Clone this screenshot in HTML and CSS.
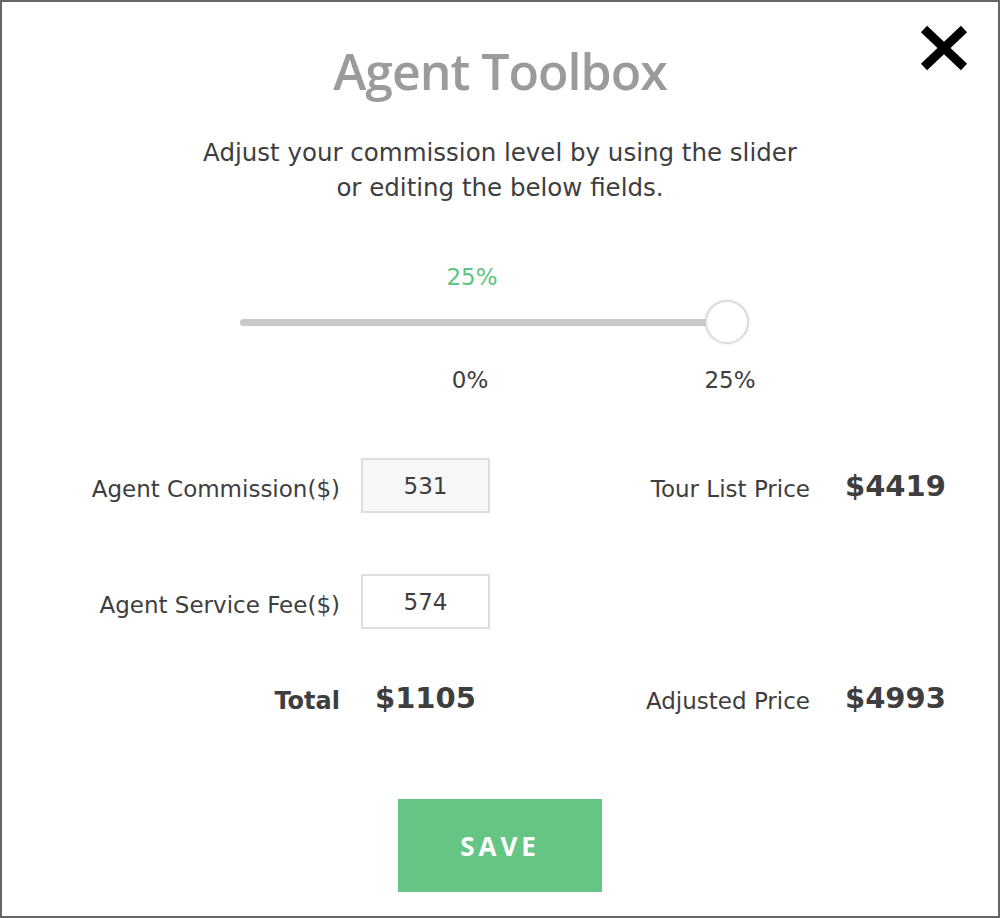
FILE: index.html
```html
<!DOCTYPE html>
<html lang="en">

<head>
    <meta charset="utf-8" />
    <meta name="viewport" content="width=device-width, initial-scale=1.0" />
    <title>Agent Toolbox</title>
    <link rel="stylesheet" href="styles.css">
</head>

<body>
    <div class="modal">
        <a class="close" href="#" aria-label="Close">
            <svg width="48" height="46" viewBox="0 0 48 46">
                <path d="M4 4 L44 42 M44 4 L4 42" stroke="#000" stroke-width="9" fill="none" />
            </svg>
        </a>
        <h1 class="title">Agent Toolbox</h1>
        <p class="intro">Adjust your commission level by using the slider<br>or editing the below fields.</p>

        <div class="slider">
            <div class="slider-value">25%</div>
            <div class="slider-rail">
                <div class="slider-thumb"></div>
            </div>
            <div class="slider-marks">
                <span class="mark mark-min">0%</span>
                <span class="mark mark-max">25%</span>
            </div>
        </div>

        <form class="fields">
            <div class="row row-first">
                <label class="label">Agent Commission($)</label>
                <div class="cell"><input class="field field-readonly" type="text" value="531"></div>
                <span class="label">Tour List Price</span>
                <span class="amount">$4419</span>
            </div>
            <div class="row row-second">
                <label class="label">Agent Service Fee($)</label>
                <div class="cell"><input class="field" type="text" value="574"></div>
                <span class="label"></span>
                <span class="amount"></span>
            </div>
            <div class="row row-total">
                <span class="label label-bold">Total</span>
                <span class="amount amount-total">$1105</span>
                <span class="label">Adjusted Price</span>
                <span class="amount">$4993</span>
            </div>
        </form>

        <div class="actions">
            <button class="save" type="button">SAVE</button>
        </div>
    </div>
</body>

</html>
```

FILE: styles.css
```css
html,
body {
    margin: 0;
    padding: 0;
    background-color: #fff;
}

.modal {
    position: relative;
    box-sizing: border-box;
    width: 1000px;
    height: 918px;
    border: 2px solid #666;
    padding-top: 37px;
    font-family: "DejaVu Sans", sans-serif;
    color: #3e3e3e;
}

.close {
    position: absolute;
    top: 23px;
    right: 30px;
    display: block;
    width: 48px;
    height: 46px;
}

.close svg {
    display: block;
}

.title {
    margin: 0;
    text-align: center;
    font-family: "Open Sans", sans-serif;
    font-weight: 600;
    font-size: 50px;
    line-height: 64px;
    letter-spacing: -1px;
    color: #9b9b9b;
}

.intro {
    margin: 32px 0 0;
    text-align: center;
    font-size: 24.5px;
    line-height: 35px;
}

.slider {
    position: relative;
    width: 487px;
    margin: 57px 0 0 238px;
}

.slider-value {
    width: 464px;
    text-align: center;
    font-size: 23px;
    line-height: 30px;
    color: #5ec481;
}

.slider-rail {
    position: relative;
    height: 7px;
    margin-top: 27px;
    border-radius: 4px;
    background-color: #c9c9c9;
}

.slider-thumb {
    position: absolute;
    right: -22px;
    top: -19px;
    box-sizing: border-box;
    width: 44px;
    height: 44px;
    border: 2px solid #dcdcdc;
    border-radius: 50%;
    background-color: #fff;
    box-shadow: 0 0 3px rgba(0, 0, 0, 0.12);
}

.slider-marks {
    position: relative;
    height: 30px;
    margin-top: 39px;
    font-size: 23px;
    line-height: 30px;
}

.mark {
    position: absolute;
    top: 0;
    transform: translateX(-50%);
}

.mark-min {
    left: 230px;
}

.mark-max {
    left: 490px;
}

.fields {
    margin: 0;
}

.row {
    display: grid;
    grid-template-columns: 338px 150px 320px auto;
    align-items: center;
    height: 55px;
    font-size: 23px;
}

.row-first {
    margin-top: 63px;
}

.row-second {
    margin-top: 61px;
}

.row-total {
    margin-top: 41px;
}

.label {
    padding-top: 6px;
    text-align: right;
}

.label-bold {
    font-weight: bold;
    font-size: 24px;
}

.cell {
    padding-left: 21px;
}

.field {
    display: block;
    box-sizing: border-box;
    width: 129px;
    height: 55px;
    padding: 0;
    border: 2px solid #dedede;
    border-radius: 0;
    background-color: #fff;
    text-align: center;
    font-family: "DejaVu Sans", sans-serif;
    font-size: 23px;
    color: #3e3e3e;
    outline: none;
}

.field-readonly {
    background-color: #f7f7f7;
}

.amount {
    padding-left: 35px;
    font-weight: bold;
    font-size: 29px;
}

.amount-total {
    padding-left: 35px;
}

.actions {
    margin-top: 74px;
    text-align: center;
}

.save {
    width: 204px;
    height: 93px;
    border: none;
    background-color: #64c585;
    color: #fff;
    font-family: "Open Sans", sans-serif;
    font-weight: 700;
    font-size: 26px;
    letter-spacing: 4px;
    cursor: pointer;
}
```
